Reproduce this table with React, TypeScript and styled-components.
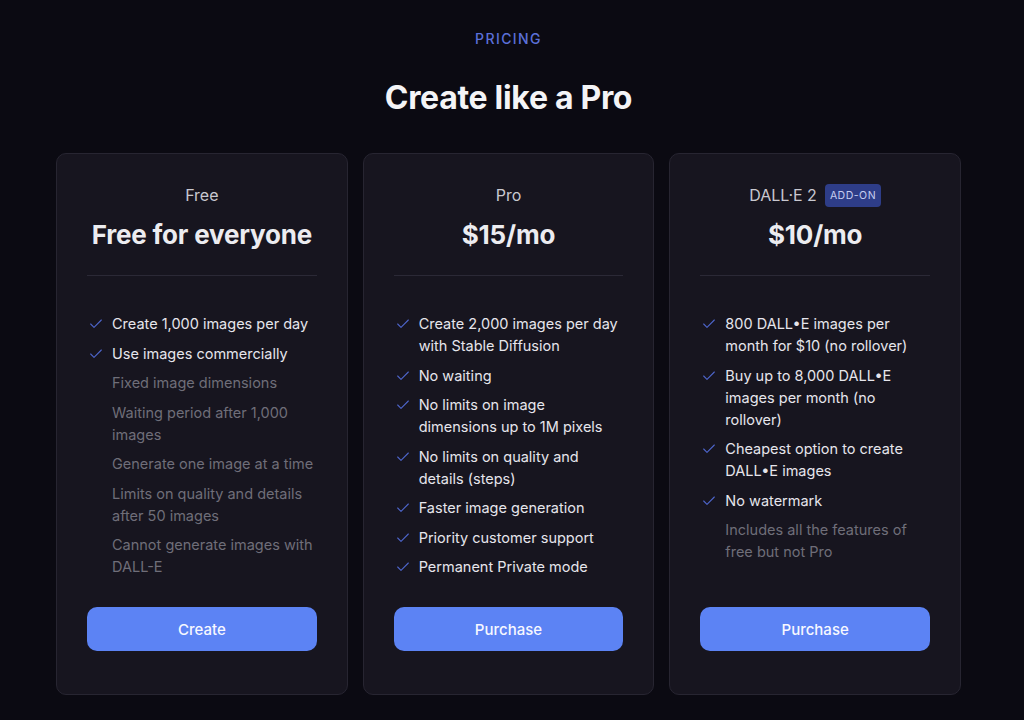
import React from "react";
import styled, { createGlobalStyle } from "styled-components";
import { Check } from "lucide-react";

const GlobalStyle = createGlobalStyle`
  html, body {
    margin: 0;
    background: #0b0a12;
  }
  body {
    font-family: Inter, "Noto Sans", "Liberation Sans", sans-serif;
    -webkit-font-smoothing: antialiased;
  }
`;

type Feature = { text: string; included: boolean };

type Plan = {
  name: string;
  badge?: string;
  price: string;
  cta: string;
  features: Feature[];
};

const plans: Plan[] = [
  {
    name: "Free",
    price: "Free for everyone",
    cta: "Create",
    features: [
      { text: "Create 1,000 images per day", included: true },
      { text: "Use images commercially", included: true },
      { text: "Fixed image dimensions", included: false },
      { text: "Waiting period after 1,000 images", included: false },
      { text: "Generate one image at a time", included: false },
      { text: "Limits on quality and details after 50 images", included: false },
      { text: "Cannot generate images with DALL-E", included: false },
    ],
  },
  {
    name: "Pro",
    price: "$15/mo",
    cta: "Purchase",
    features: [
      { text: "Create 2,000 images per day with Stable Diffusion", included: true },
      { text: "No waiting", included: true },
      { text: "No limits on image dimensions up to 1M pixels", included: true },
      { text: "No limits on quality and details (steps)", included: true },
      { text: "Faster image generation", included: true },
      { text: "Priority customer support", included: true },
      { text: "Permanent Private mode", included: true },
    ],
  },
  {
    name: "DALL·E 2",
    badge: "ADD-ON",
    price: "$10/mo",
    cta: "Purchase",
    features: [
      { text: "800 DALL•E images per month for $10 (no rollover)", included: true },
      { text: "Buy up to 8,000 DALL•E images per month (no rollover)", included: true },
      { text: "Cheapest option to create DALL•E images", included: true },
      { text: "No watermark", included: true },
      { text: "Includes all the features of free but not Pro", included: false },
    ],
  },
];

const Page = styled.main`
  padding: 29px 63px 24px 56px;
  display: flex;
  flex-direction: column;
  align-items: center;
`;

const Eyebrow = styled.div`
  font-size: 14px;
  line-height: 20px;
  letter-spacing: 1.4px;
  color: #5b70d9;
  font-weight: 500;
`;

const Title = styled.h1`
  margin: 30px 0 0;
  font-size: 32px;
  line-height: 38px;
  font-weight: 700;
  color: #f4f4f6;
  letter-spacing: -0.3px;
`;

const Grid = styled.div`
  margin-top: 36px;
  width: 100%;
  display: grid;
  grid-template-columns: repeat(3, 1fr);
  gap: 15px;
`;

const Card = styled.section`
  background: #17151f;
  border: 1px solid #272531;
  border-radius: 10px;
  padding: 29px 30px 43px;
  display: flex;
  flex-direction: column;
`;

const PlanName = styled.div`
  display: flex;
  justify-content: center;
  align-items: center;
  gap: 8px;
  font-size: 16px;
  line-height: 24px;
  color: #c9c8d0;
`;

const Badge = styled.span`
  background: #2e3d88;
  color: #c6cdf0;
  font-size: 10.5px;
  line-height: 23px;
  font-weight: 400;
  letter-spacing: 0.5px;
  padding: 0 5px;
  border-radius: 4px;
`;

const Price = styled.div`
  margin-top: 11px;
  text-align: center;
  font-size: 26px;
  line-height: 34px;
  font-weight: 700;
  color: #ececf0;
  letter-spacing: -0.2px;
`;

const Divider = styled.hr`
  margin: 23px 0 0;
  border: 0;
  height: 1px;
  background: #2b2936;
`;

const FeatureList = styled.ul`
  list-style: none;
  margin: 37px 0 0;
  padding: 0;
  flex: 1;
  display: flex;
  flex-direction: column;
  gap: 7.5px;
`;

const FeatureItem = styled.li<{ $included: boolean }>`
  display: flex;
  gap: 7px;
  font-size: 14.5px;
  line-height: 22px;
  color: ${(p) => (p.$included ? "#e6e5ec" : "#6f6e79")};
`;

const IconSlot = styled.span`
  flex: 0 0 18px;
  height: 22px;
  display: flex;
  align-items: center;
  justify-content: center;
  color: #4e66cc;
`;

const Button = styled.button`
  margin-top: 29px;
  height: 44px;
  width: 100%;
  border: 0;
  border-radius: 10px;
  background: #5c83f4;
  color: #f7f8ff;
  font-family: inherit;
  font-size: 15px;
  font-weight: 500;
  cursor: pointer;
`;

const PlanCard = ({ plan }: { plan: Plan }) => (
  <Card>
    <PlanName>
      {plan.name}
      {plan.badge && <Badge>{plan.badge}</Badge>}
    </PlanName>
    <Price>{plan.price}</Price>
    <Divider />
    <FeatureList>
      {plan.features.map((f) => (
        <FeatureItem key={f.text} $included={f.included}>
          <IconSlot>{f.included && <Check size={16} strokeWidth={1.6} />}</IconSlot>
          <span>{f.text}</span>
        </FeatureItem>
      ))}
    </FeatureList>
    <Button>{plan.cta}</Button>
  </Card>
);

export default function App() {
  return (
    <>
      <GlobalStyle />
      <Page>
        <Eyebrow>PRICING</Eyebrow>
        <Title>Create like a Pro</Title>
        <Grid>
          {plans.map((p) => (
            <PlanCard key={p.name} plan={p} />
          ))}
        </Grid>
      </Page>
    </>
  );
}
